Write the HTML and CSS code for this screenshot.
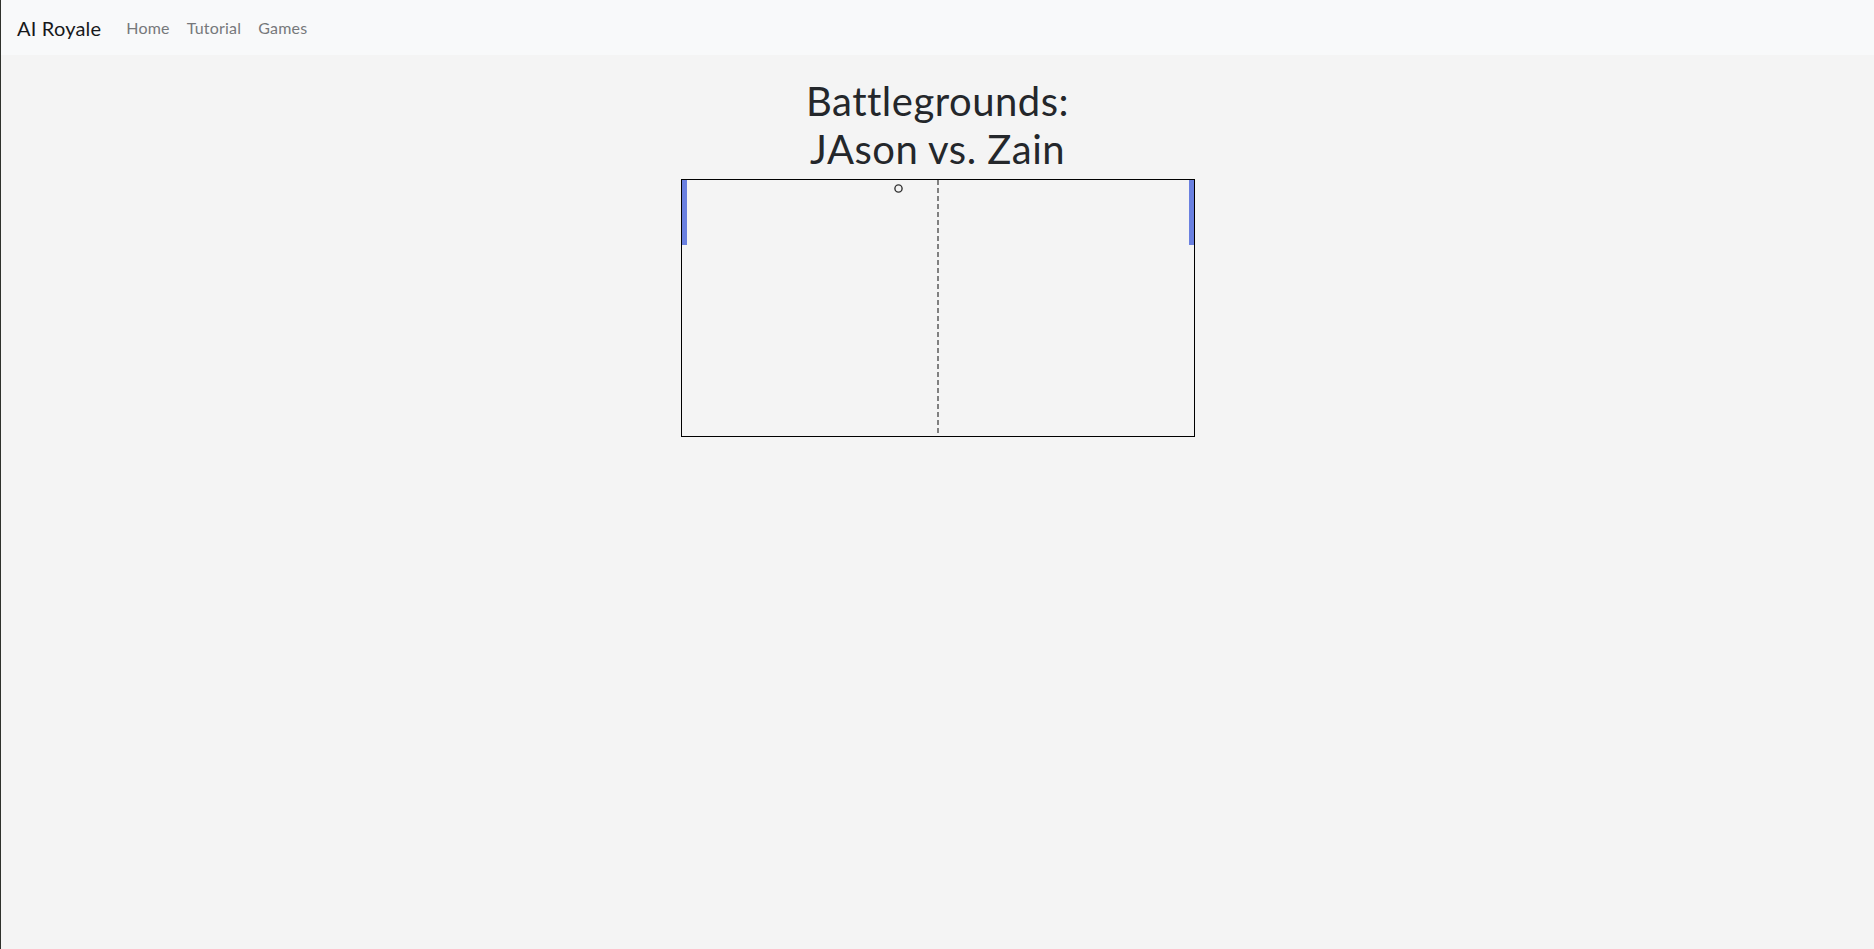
FILE: index.html
```html
<!DOCTYPE html>
<html lang="en">
<head>
<meta charset="utf-8">
<title>AI Royale - Battlegrounds</title>
<link rel="stylesheet" href="styles.css">
</head>
<body>
<nav class="navbar">
  <a class="brand" href="#">AI Royale</a>
  <ul class="nav-links">
    <li><a href="#">Home</a></li>
    <li><a href="#">Tutorial</a></li>
    <li><a href="#">Games</a></li>
  </ul>
</nav>
<main class="main">
  <h1 class="title">Battlegrounds:<br>JAson vs. Zain</h1>
  <div class="court">
    <svg class="court-svg" width="512" height="256" viewBox="0 0 512 256">
      <line x1="256" y1="0" x2="256" y2="256" stroke="#808080" stroke-width="2" stroke-dasharray="5 3"/>
      <rect x="0" y="0" width="5" height="65" fill="#6a80e0"/>
      <rect x="507" y="0" width="5" height="65" fill="#6a80e0"/>
      <circle cx="216.5" cy="8.5" r="3.6" fill="none" stroke="#333" stroke-width="1.4"/>
    </svg>
  </div>
</main>
</body>
</html>
```
FILE: styles.css
```css
html, body {
  margin: 0;
  padding: 0;
}
body {
  min-height: 100vh;
  box-sizing: border-box;
  border-left: 1px solid #2f312c;
  background: #f4f4f4;
  font-family: Lato, "Noto Sans", "Liberation Sans", sans-serif;
  color: #212529;
}
.navbar {
  display: flex;
  align-items: center;
  height: 55px;
  padding: 0 16px;
  background: #f8f9fa;
}
.brand {
  font-size: 20px;
  color: #16181b;
  text-decoration: none;
  margin-right: 25px;
  letter-spacing: 0.2px;
}
.nav-links {
  display: flex;
  gap: 17px;
  list-style: none;
  margin: 0;
  padding: 0;
}
.nav-links a {
  font-size: 16px;
  color: #76787a;
  text-decoration: none;
  letter-spacing: 0.2px;
}
.main {
  display: flex;
  flex-direction: column;
  align-items: center;
}
.title {
  margin: 22px 0 6px;
  font-size: 40px;
  line-height: 48px;
  font-weight: 400;
  text-align: center;
  letter-spacing: 0.5px;
  color: #24272b;
}
.court {
  width: 512px;
  height: 256px;
  border: 1px solid #000;
}
.court-svg {
  display: block;
}
```
